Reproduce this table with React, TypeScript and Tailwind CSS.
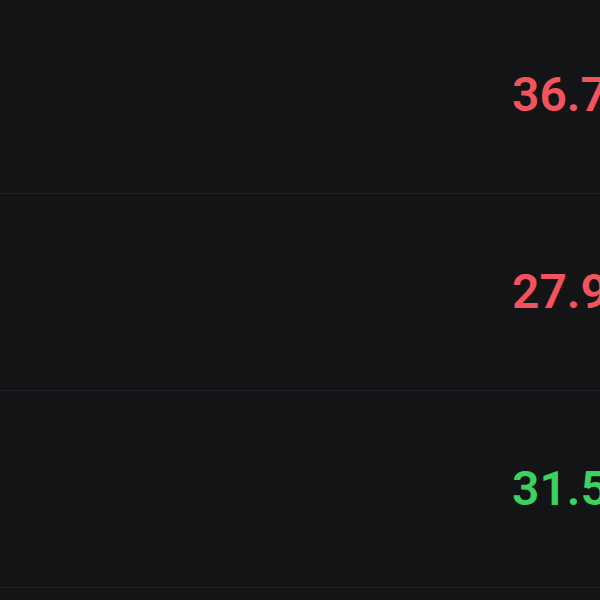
const rows = [
  { value: "36.72", up: false },
  { value: "27.91", up: false },
  { value: "31.58", up: true },
];

export default function App() {
  return (
    <div className="h-[600px] w-[600px] overflow-hidden bg-[#131416] font-['Roboto',sans-serif]">
      <div className="mt-[-3px]">
        {rows.map((row) => (
          <div
            key={row.value}
            className="grid h-[197px] grid-cols-[512px_1fr] items-center border-b border-[#202124]"
          >
            <div />
            <span
              className={
                "whitespace-nowrap text-[48px] font-semibold leading-none " +
                (row.up ? "text-[#3dd160]" : "text-[#f2535d]")
              }
            >
              {row.value}
            </span>
          </div>
        ))}
      </div>
    </div>
  );
}
